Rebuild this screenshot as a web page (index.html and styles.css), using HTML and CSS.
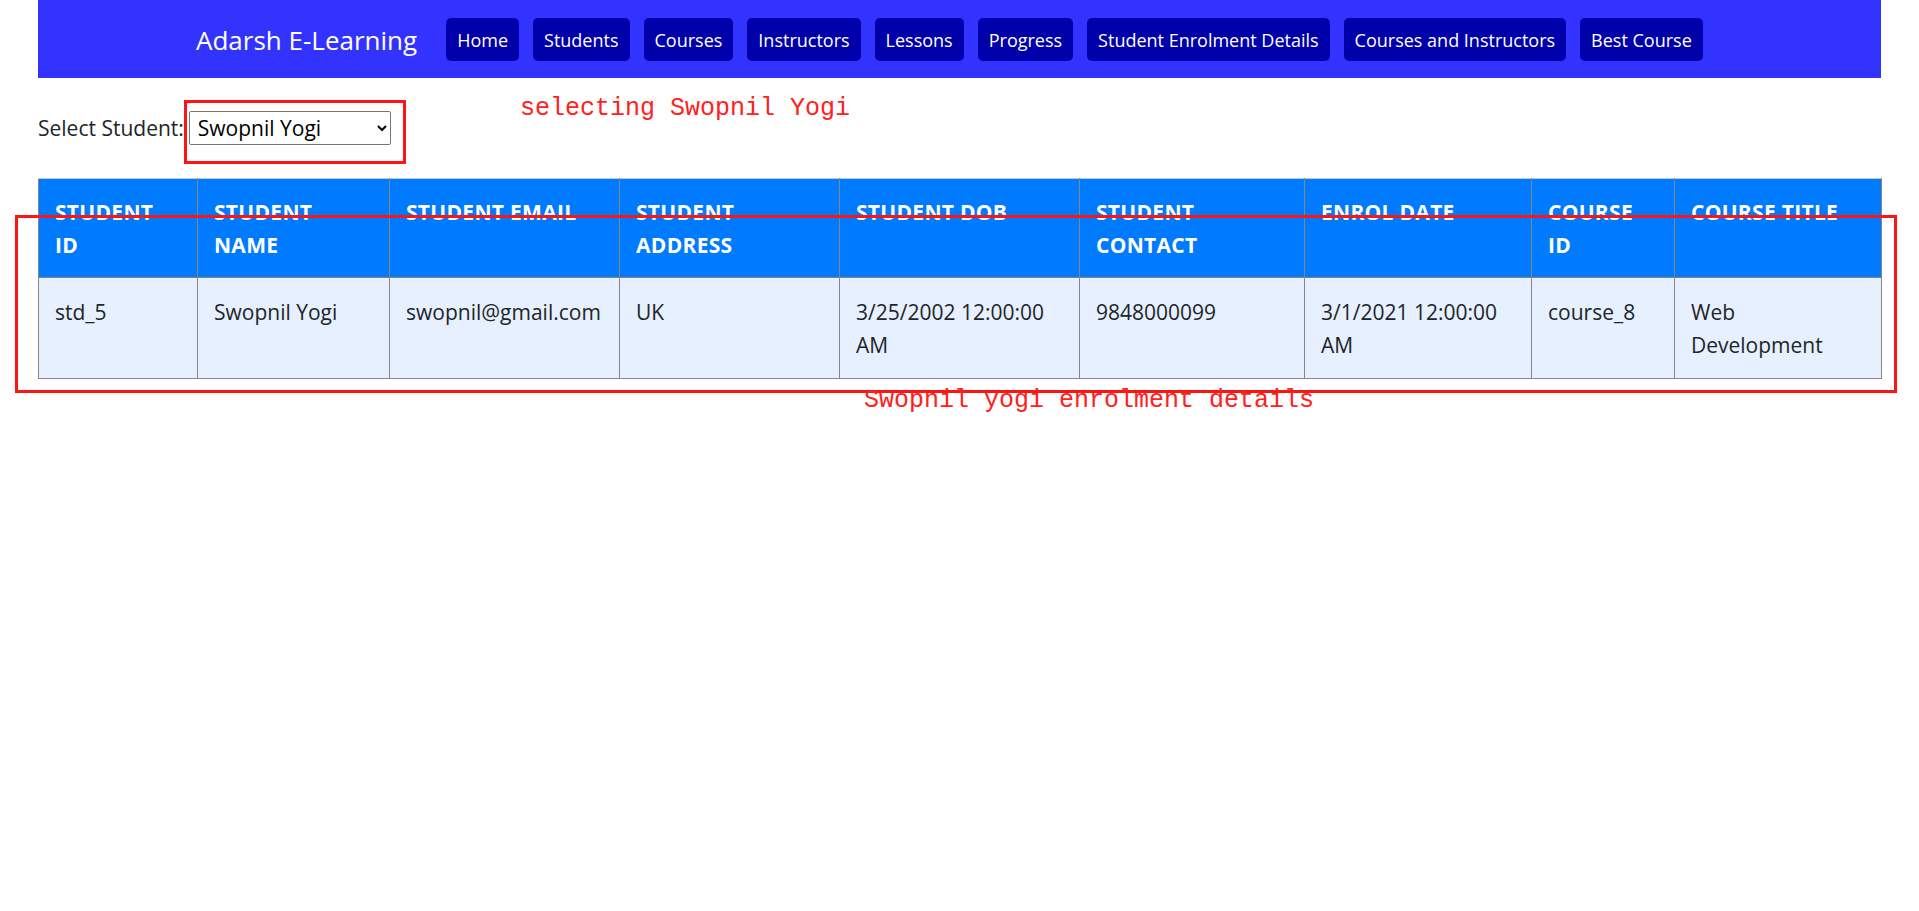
FILE: index.html
```html
<!DOCTYPE html>
<html lang="en">
<head>
<meta charset="utf-8">
<title>Adarsh E-Learning</title>
<link rel="stylesheet" href="styles.css">
</head>
<body>
<div class="page">
  <nav class="navbar">
    <span class="brand">Adarsh E-Learning</span>
    <div class="nav-links">
      <a class="nav-btn" href="#">Home</a>
      <a class="nav-btn" href="#">Students</a>
      <a class="nav-btn" href="#">Courses</a>
      <a class="nav-btn" href="#">Instructors</a>
      <a class="nav-btn" href="#">Lessons</a>
      <a class="nav-btn" href="#">Progress</a>
      <a class="nav-btn" href="#">Student Enrolment Details</a>
      <a class="nav-btn" href="#">Courses and Instructors</a>
      <a class="nav-btn" href="#">Best Course</a>
    </div>
  </nav>

  <div class="controls">
    <label class="select-label" for="student">Select Student:</label>
    <select id="student" class="student-select">
      <option>Swopnil Yogi</option>
    </select>
  </div>

  <table class="enrol-table">
    <colgroup>
      <col class="c1"><col class="c2"><col class="c3"><col class="c4"><col class="c5">
      <col class="c6"><col class="c7"><col class="c8"><col class="c9">
    </colgroup>
    <thead>
      <tr>
        <th>Student<br>ID</th>
        <th>Student<br>Name</th>
        <th>Student Email</th>
        <th>Student<br>Address</th>
        <th>Student DOB</th>
        <th>Student<br>Contact</th>
        <th>Enrol Date</th>
        <th>Course<br>ID</th>
        <th>Course Title</th>
      </tr>
    </thead>
    <tbody>
      <tr>
        <td>std_5</td>
        <td>Swopnil Yogi</td>
        <td>swopnil@gmail.com</td>
        <td>UK</td>
        <td>3/25/2002 12:00:00<br>AM</td>
        <td>9848000099</td>
        <td>3/1/2021 12:00:00<br>AM</td>
        <td>course_8</td>
        <td>Web<br>Development</td>
      </tr>
    </tbody>
  </table>
</div>

<div class="note-box note-box-select"></div>
<div class="note-text note-text-select">selecting Swopnil Yogi</div>
<div class="note-box note-box-table"></div>
<div class="note-text note-text-table">Swopnil yogi enrolment details</div>
</body>
</html>
```

FILE: styles.css
```css
html, body {
  margin: 0;
  padding: 0;
  background: #ffffff;
}

body {
  position: relative;
  min-height: 911px;
  font-family: "Open Sans", "Noto Sans", sans-serif;
  font-size: 21px;
  color: #212529;
}

.page {
  margin: 0 38px;
}

.navbar {
  display: flex;
  align-items: center;
  height: 78px;
  padding-left: 158px;
  background: #3333ff;
}

.brand {
  font-size: 26px;
  color: #ffffff;
  margin-right: 29px;
  line-height: 1;
  padding-top: 2px;
}

.nav-links {
  display: flex;
  gap: 14px;
}

.nav-btn {
  display: flex;
  align-items: center;
  height: 43px;
  padding: 1px 11px 0;
  box-sizing: border-box;
  border-radius: 5px;
  background: #0000aa;
  color: #ffffff;
  font-size: 18px;
  text-decoration: none;
  white-space: nowrap;
}

.controls {
  display: flex;
  align-items: baseline;
  gap: 5px;
  margin-top: 33px;
}

.select-label {
  font-size: 21px;
  color: #212529;
}

.student-select {
  width: 202px;
  height: 34px;
  font-family: "Open Sans", "Noto Sans", sans-serif;
  font-size: 21px;
  color: #000000;
  background: #ffffff;
  border: 1px solid #767676;
  border-radius: 2px;
  padding: 0 4px;
}

.enrol-table {
  width: 100%;
  margin-top: 33px;
  border-collapse: collapse;
  table-layout: fixed;
}

.c1 { width: 159px; }
.c2 { width: 192px; }
.c3 { width: 230px; }
.c4 { width: 220px; }
.c5 { width: 240px; }
.c6 { width: 225px; }
.c7 { width: 227px; }
.c8 { width: 143px; }
.c9 { width: 207px; }

.enrol-table th,
.enrol-table td {
  border: 1px solid #858585;
  line-height: 33px;
  text-align: left;
  vertical-align: top;
}

.enrol-table th {
  padding: 17px 16px 15px;
  background: #007bff;
  color: #ffffff;
  font-weight: 700;
  text-transform: uppercase;
  font-size: 21px;
  letter-spacing: 0.3px;
  border-top-color: #c8c8c8;
}

.enrol-table td {
  padding: 18px 16px 16px;
  background: #e6f0ff;
  color: #212529;
  font-size: 21px;
}

/* screenshot annotations */
.note-box {
  position: absolute;
  box-sizing: border-box;
  border: 3px solid #ff1414;
}

.note-box-select {
  left: 184px;
  top: 100px;
  width: 222px;
  height: 64px;
}

.note-box-table {
  left: 15px;
  top: 215px;
  width: 1882px;
  height: 178px;
}

.note-text {
  position: absolute;
  font-family: "Liberation Mono", "DejaVu Sans Mono", monospace;
  font-size: 25px;
  line-height: 25px;
  color: #ff2020;
  white-space: nowrap;
}

.note-text-select {
  left: 520px;
  top: 96px;
}

.note-text-table {
  left: 864px;
  top: 388px;
}
```
